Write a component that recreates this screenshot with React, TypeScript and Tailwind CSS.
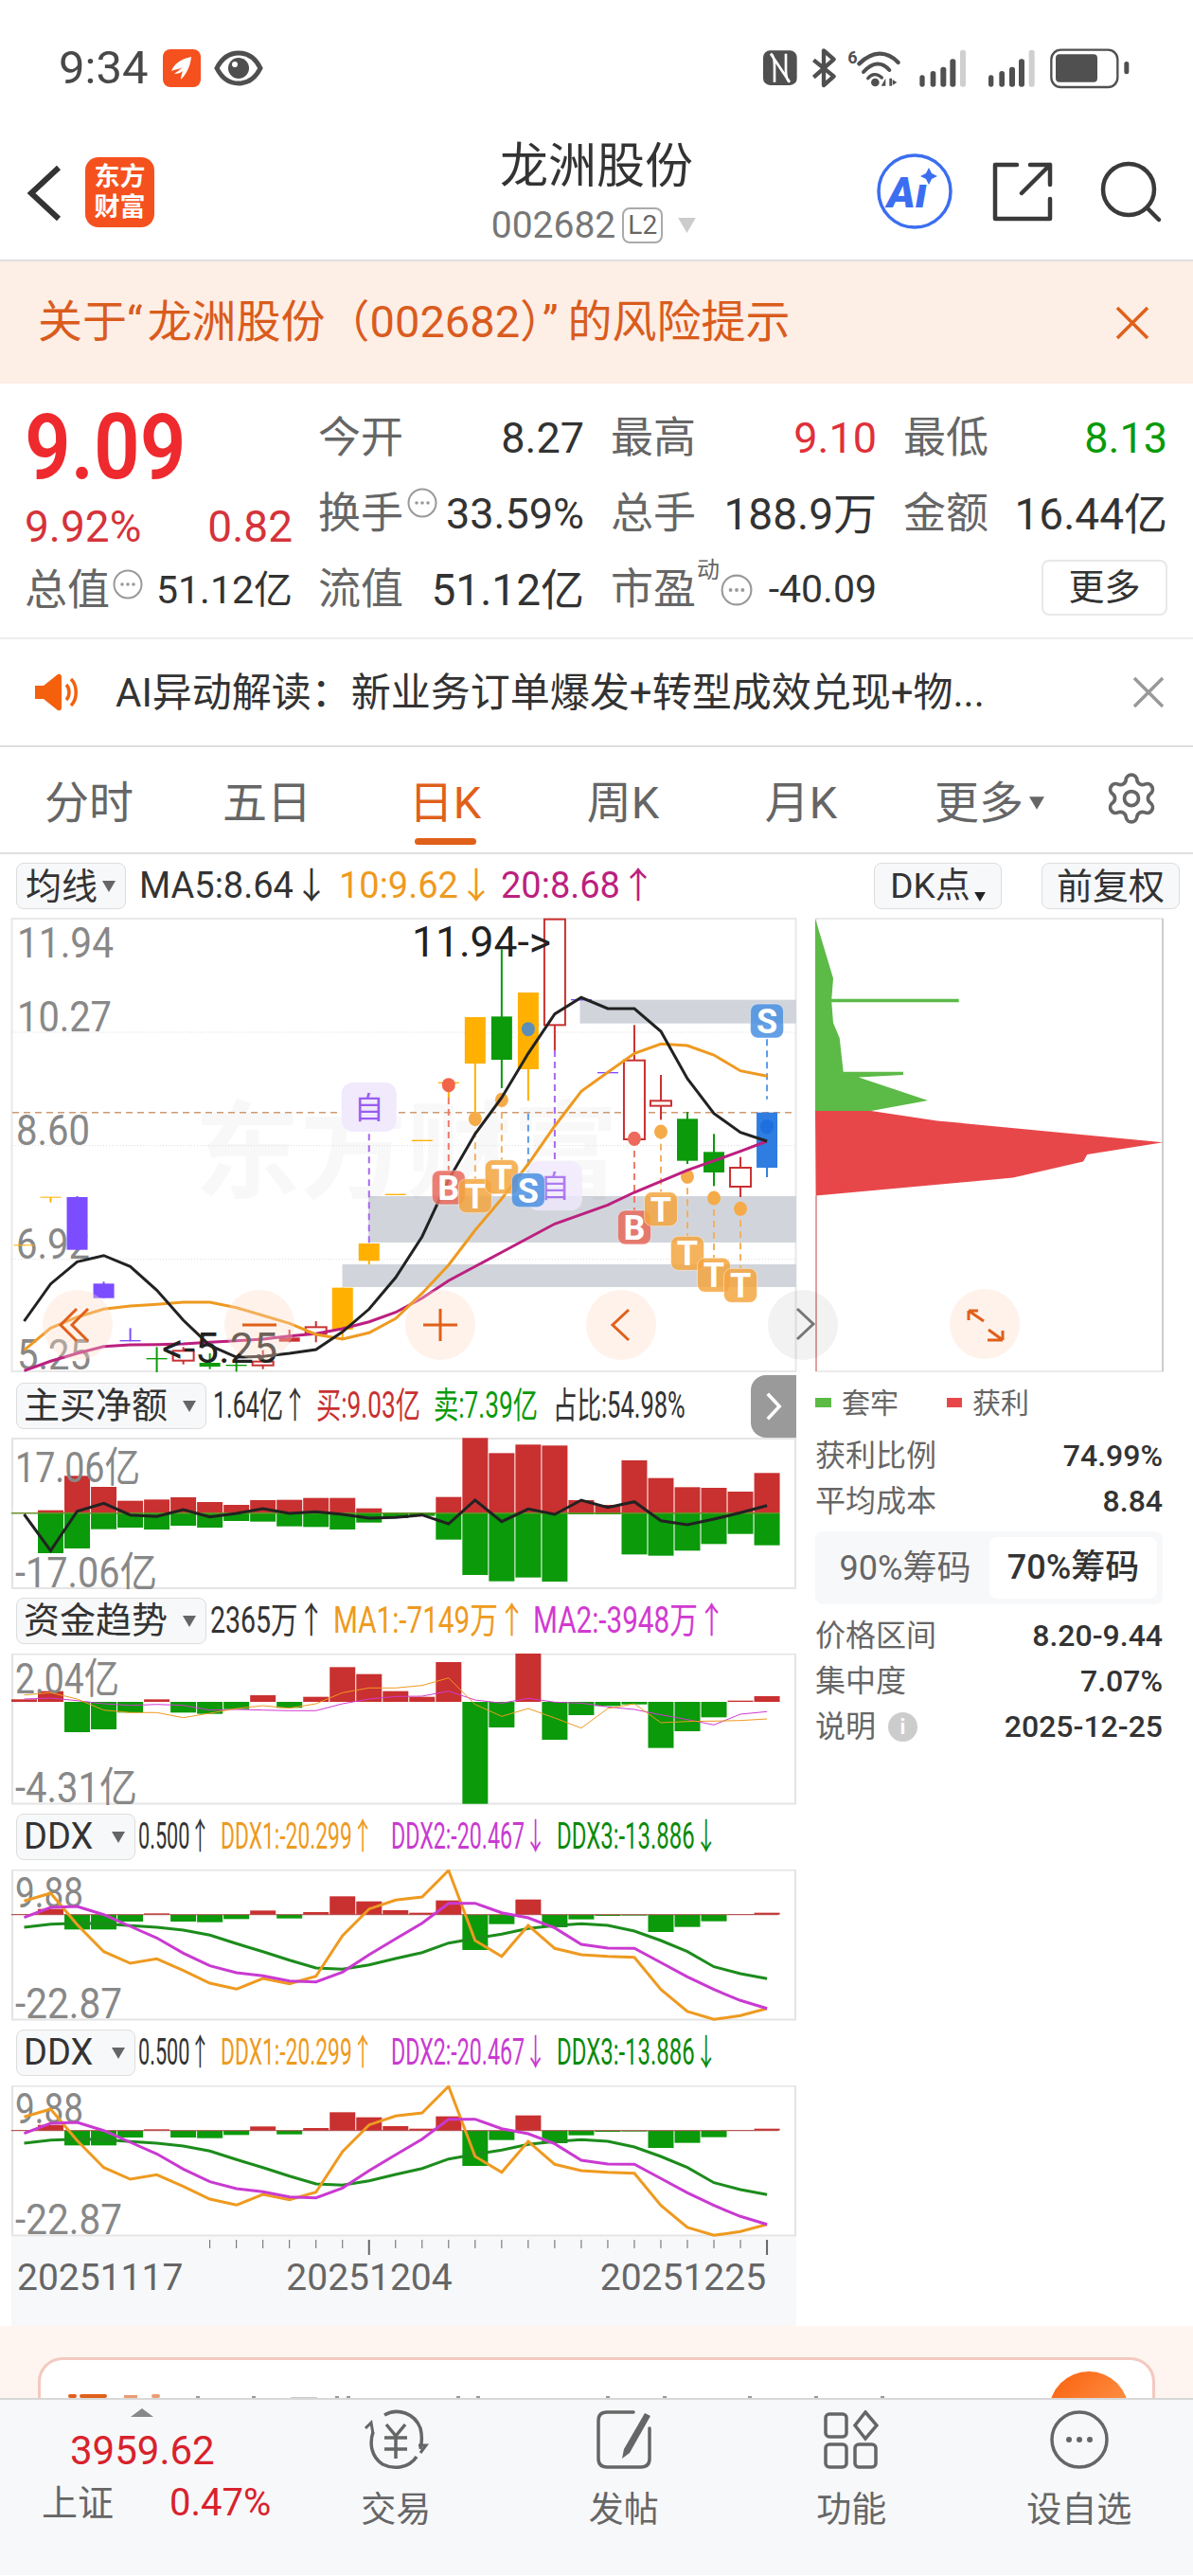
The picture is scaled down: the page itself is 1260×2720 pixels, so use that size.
import React from "react";
import { Settings } from "lucide-react";

const cx = (i: number) => 25.5 + 28.02 * i;
const zx = (v: number) => v / 1.845;
const line = (vals: number[], base: number) =>
  vals.map((v, i) => `${cx(i).toFixed(1)},${(base + v / 3).toFixed(1)}`).join(" ");

const RED = "#c93030";
const GREEN = "#0a9a0a";
const ORANGE = "#ffb000";
const PURPLE = "#7c4dff";
const BLUE = "#2f7de1";

// [index, wickTop, top, bottom, wickBottom, colour, hollow]
const candles: [number, number, number, number, number, string, boolean][] = [
  [0, 1097, 1096, 1099, 1099, ORANGE, false],
  [1, 945, 944, 947, 962, ORANGE, false],
  [2, 942, 945, 1112, 1112, PURPLE, false],
  [3, 1213, 1219, 1265, 1265, PURPLE, false],
  [4, 1360, 1398, 1402, 1402, PURPLE, false],
  [5, 1420, 1455, 1459, 1500, GREEN, false],
  [6, 1420, 1432, 1463, 1475, RED, true],
  [7, 1440, 1470, 1482, 1490, GREEN, false],
  [8, 1465, 1476, 1480, 1498, GREEN, false],
  [9, 1430, 1466, 1478, 1490, RED, true],
  [10, 1365, 1390, 1403, 1405, RED, false],
  [11, 1338, 1357, 1378, 1405, RED, true],
  [12, 1232, 1232, 1365, 1395, ORANGE, false],
  [13, 1092, 1092, 1147, 1158, ORANGE, false],
  [14, 936, 935, 939, 939, ORANGE, false],
  [15, 765, 764, 768, 768, ORANGE, false],
  [16, 581, 581, 585, 630, ORANGE, false],
  [17, 375, 375, 522, 680, ORANGE, false],
  [18, 160, 373, 510, 600, GREEN, false],
  [19, 297, 297, 540, 640, ORANGE, false],
  [20, 65, 65, 400, 480, RED, true],
  [21, 319, 318, 322, 322, PURPLE, false],
  [22, 550, 549, 553, 553, PURPLE, false],
  [23, 400, 512, 762, 762, RED, true],
  [24, 558, 640, 656, 700, RED, true],
  [25, 675, 697, 830, 840, GREEN, false],
  [26, 745, 802, 867, 910, GREEN, false],
  [27, 818, 852, 912, 945, RED, true],
  [28, 677, 677, 852, 882, BLUE, false],
];

const ma5 = [1338, 1220, 1150, 1130, 1165, 1240, 1335, 1415, 1452, 1450, 1440, 1428, 1372, 1300, 1200, 1070, 890, 745, 630, 490, 365, 313, 348, 348, 420, 570, 680, 740, 768];
const ma10 = [1430, 1360, 1325, 1300, 1290, 1285, 1278, 1278, 1295, 1320, 1345, 1380, 1395, 1375, 1330, 1250, 1160, 1050, 950, 840, 720, 610, 550, 490, 460, 465, 495, 545, 562];
const ma20 = [1495, 1465, 1440, 1418, 1413, 1412, 1410, 1405, 1400, 1395, 1385, 1378, 1362, 1340, 1310, 1265, 1210, 1165, 1120, 1075, 1030, 1000, 970, 930, 895, 860, 830, 800, 768];

const netTop = [476, 467, 358, 393, 437, 433, 426, 441, 450, 435, 434, 428, 428, 461, 474, 475, 425, 238, 286, 259, 262, 435, 450, 309, 365, 394, 396, 408, 349];
const netBot = [476, 603, 588, 527, 522, 528, 516, 522, 501, 503, 518, 520, 528, 506, 492, 485, 560, 672, 692, 680, 693, 480, 480, 607, 611, 595, 574, 542, 578];
const netLine = [480, 595, 470, 445, 482, 487, 465, 488, 477, 462, 477, 472, 480, 492, 490, 482, 510, 435, 503, 463, 480, 435, 458, 440, 500, 513, 495, 475, 452];

const flow = [1066, 1040, 1170, 1161, 1108, 1066, 1108, 1112, 1097, 1053, 1093, 1058, 964, 986, 1040, 1058, 948, 1397, 1155, 920, 1194, 1116, 1087, 1082, 1220, 1167, 1123, 1070, 1056];
const flowMa1 = [1052, 1045, 1065, 1100, 1108, 1108, 1124, 1110, 1095, 1086, 1094, 1080, 1045, 1030, 1030, 1022, 998, 1082, 1120, 1095, 1125, 1157, 1095, 1080, 1140, 1136, 1135, 1133, 1128];
const flowMa2 = [1065, 1062, 1070, 1080, 1085, 1082, 1085, 1100, 1098, 1100, 1102, 1102, 1080, 1065, 1057, 1056, 1040, 1068, 1078, 1063, 1075, 1078, 1090, 1098, 1115, 1130, 1147, 1113, 1105];

const ddxBars = [366, 350, 415, 415, 390, 364, 390, 392, 382, 355, 380, 360, 310, 326, 354, 362, 323, 480, 398, 320, 408, 383, 372, 371, 423, 407, 389, 366, 362];
const ddx1 = [325, 300, 400, 485, 522, 508, 545, 585, 604, 570, 587, 563, 435, 350, 322, 312, 228, 450, 500, 402, 475, 495, 500, 503, 605, 675, 700, 688, 665];
const ddx2 = [377, 345, 342, 368, 405, 442, 490, 530, 552, 562, 578, 581, 550, 495, 445, 395, 332, 332, 362, 378, 410, 462, 474, 475, 520, 565, 605, 640, 665];
const ddx3 = [408, 398, 395, 397, 403, 408, 417, 433, 460, 485, 512, 537, 541, 527, 507, 488, 458, 443, 430, 412, 403, 397, 402, 420, 450, 485, 533, 555, 571];

const Tri = ({ className = "", color = "#666" }: { className?: string; color?: string }) => (
  <svg viewBox="0 0 14 12" className={className}>
    <path d="M0 0H14L7 12Z" fill={color} />
  </svg>
);

const Dots = ({ className = "" }: { className?: string }) => (
  <svg viewBox="0 0 32 32" className={className}>
    <circle cx="16" cy="16" r="14.5" fill="none" stroke="#999" strokeWidth="2" />
    <circle cx="10" cy="16" r="1.8" fill="#999" />
    <circle cx="16" cy="16" r="1.8" fill="#999" />
    <circle cx="22" cy="16" r="1.8" fill="#999" />
  </svg>
);

const StatusBar = () => (
  <div className="h-[100px] flex items-start pt-[52px] pl-[62px]">
    <span className="text-[49px] leading-[40px] text-[#484848] w-[110px]">9:34</span>
    <div className="w-[40px] h-[40px] rounded-lg bg-[#f4511e] flex items-center justify-center">
      <svg viewBox="0 0 40 40" className="w-[40px] h-[40px]">
        <path d="M30 8C20 10 12 15 9 23c5-2 9-2 12-4-3 3-7 5-9 7 4 0 7-1 9-3-1 3-2 6-2 9 6-6 10-14 11-24Z" fill="#fff" />
      </svg>
    </div>
    <svg viewBox="0 0 52 40" className="w-[52px] h-[40px] ml-[14px]">
      <path d="M3 20C9 8 17 4 26 4s17 4 23 16c-6 12-14 16-23 16S9 32 3 20Z" fill="none" stroke="#4f4f4f" strokeWidth="5" />
      <circle cx="26" cy="20" r="11" fill="#4f4f4f" />
      <circle cx="22" cy="16" r="3" fill="#fff" />
    </svg>
    <svg viewBox="0 0 1260 210" className="w-[420px] h-[70px] ml-[512px] -mt-[12px]">
      <rect x="48" y="40" width="107" height="110" rx="22" fill="#505050" />
      <path d="M72 50C82 56 84 70 84 88V140M72 50L132 140M120 50V102C120 120 122 134 132 140" fill="none" stroke="#fff" strokeWidth="8" />
      <path d="M208 70L272 122L240 150V40L272 68L208 125" fill="none" stroke="#505050" strokeWidth="13" strokeLinejoin="round" />
      <text x="316" y="82" fontSize="54" fontWeight="700" fill="#505050">6</text>
      <path d="M352 82C395 40 440 40 476 78" fill="none" stroke="#505050" strokeWidth="13" strokeLinecap="round" />
      <path d="M366 108C395 75 425 75 448 102" fill="none" stroke="#505050" strokeWidth="12" strokeLinecap="round" />
      <path d="M380 128C392 112 410 112 424 126" fill="none" stroke="#505050" strokeWidth="10" strokeLinecap="round" />
      <circle cx="403" cy="141" r="13" fill="#505050" />
      <path d="M422 152L436 128V152ZM448 128V152H456V128ZM458 132L472 141L458 150Z" fill="#505050" />
      {[0, 218].map((off) => (
        <g key={off}>
          <rect x={544 + off} y="118" width="16" height="37" rx="8" fill="#505050" />
          <rect x={578 + off} y="105" width="17" height="50" rx="8" fill="#505050" />
          <rect x={610 + off} y="92" width="18" height="63" rx="8" fill="#505050" />
          <rect x={640 + off} y="67" width="18" height="88" rx="8" fill="#505050" />
          <rect x={672 + off} y="38" width="18" height="117" rx="8" fill="#cfcfcf" />
        </g>
      ))}
      <rect x="961" y="38" width="210" height="118" rx="30" fill="none" stroke="#505050" strokeWidth="7" />
      <rect x="975" y="52" width="132" height="88" rx="12" fill="#505050" />
      <rect x="1192" y="75" width="15" height="40" rx="7" fill="#505050" />
    </svg>
  </div>
);

const Header = () => (
  <div className="h-[176px] border-b-2 border-[#e0e0e0] flex">
    <div className="w-[400px] flex items-start pt-[66px] pl-[28px]">
      <svg viewBox="0 0 38 60" className="w-[38px] h-[60px] mt-[8px]">
        <path d="M34 3L5 30L34 57" fill="none" stroke="#333" strokeWidth="6" />
      </svg>
      <div className="ml-[24px] w-[73px] h-[74px] rounded-[14px] bg-[#f4511e] text-white text-[27px] leading-[32px] font-bold text-center pt-[5px]">
        东方
        <br />
        财富
      </div>
    </div>
    <div className="w-[460px] flex flex-col items-center pt-[46px]">
      <span className="text-[51px] leading-[60px] text-[#333]">龙洲股份</span>
      <div className="flex items-center mt-[12px] h-[40px] -ml-[3px]">
        <span className="text-[39px] leading-[40px] text-[#777]">002682</span>
        <span className="ml-[7px] w-[43px] h-[38px] border-2 border-[#aaa] rounded-lg text-[28px] leading-[34px] text-center text-[#666]">L2</span>
        <Tri className="ml-[13px] w-[25px] h-[16px]" color="#ccc" />
      </div>
    </div>
    <div className="flex-1 flex items-start pt-[60px] pl-[64px]">
      <svg viewBox="0 0 84 84" className="w-[84px] h-[84px]">
        <circle cx="42" cy="42" r="38" fill="none" stroke="#3b6ef0" strokeWidth="3.5" />
        <text x="13" y="59" fontSize="45" fontWeight="900" fontStyle="italic" fill="#3b6ef0">Aı</text>
        <path d="M57 17L60 23L66 26L60 29L57 35L54 29L48 26L54 23Z" fill="#3b6ef0" />
      </svg>
      <svg viewBox="0 0 64 64" className="w-[64px] h-[64px] ml-[40px] mt-[10px]">
        <path d="M26 4H3V61H61V40M40 4H61V25M61 4L31 34" fill="none" stroke="#3a3a3a" strokeWidth="4.5" strokeLinecap="round" strokeLinejoin="round" />
      </svg>
      <svg viewBox="0 0 66 66" className="w-[66px] h-[66px] ml-[50px] mt-[10px]">
        <circle cx="30" cy="30" r="27" fill="none" stroke="#3a3a3a" strokeWidth="4.5" />
        <path d="M50 50L62 62" stroke="#3a3a3a" strokeWidth="4.5" strokeLinecap="round" />
      </svg>
    </div>
  </div>
);

const Banner = () => (
  <div className="h-[129px] bg-[#fdeee6] flex items-center justify-between pl-[40px] pr-[46px]">
    <span className="text-[47px] text-[#d95c1d] whitespace-nowrap">
      关于<span className="mr-[5px]">“</span>龙洲股份（002682）<span className="mr-[10px]">”</span>的风险提示
    </span>
    <svg viewBox="0 0 36 36" className="w-[36px] h-[36px]">
      <path d="M2 2L34 34M34 2L2 34" stroke="#e0601a" strokeWidth="3.5" />
    </svg>
  </div>
);

const Cell = ({ label, value, color = "#333", big, extra }: { label: string; value: string; color?: string; big?: boolean; extra?: React.ReactNode }) => (
  <div className="flex items-center justify-between h-[80px] whitespace-nowrap">
    <span className="text-[45px] text-[#666] flex items-center">
      {label}
      {extra}
    </span>
    <span className={big ? "text-[46px]" : "text-[45px]"} style={{ color }}>{value}</span>
  </div>
);

const Quote = () => (
  <div className="h-[270px] border-b-2 border-[#eee] flex">
    <div className="w-[336px] pl-[26px] pr-[27px] pt-[21px]">
      <div className="h-[92px] flex items-center">
        <span className="text-[97px] leading-[92px] font-semibold text-[#ee2a2e] origin-left scale-x-[0.88] inline-block">9.09</span>
      </div>
      <div className="h-[76px] flex items-center justify-between text-[46px] text-[#d5333b]">
        <span>9.92%</span>
        <span>0.82</span>
      </div>
      <div className="h-[60px] flex items-center justify-between whitespace-nowrap">
        <span className="text-[45px] text-[#666] flex items-center">
          总值
          <Dots className="w-[32px] h-[32px] -mt-[14px] ml-[3px]" />
        </span>
        <span className="text-[41px] text-[#333]">51.12亿</span>
      </div>
    </div>
    <div className="flex-1 pt-[18px] pr-[27px] grid grid-cols-[281px_281px_279px] gap-x-[28px] content-start">
      <Cell label="今开" value="8.27" />
      <Cell label="最高" value="9.10" color="#e0303a" />
      <Cell label="最低" value="8.13" color="#0a9a0a" />
      <Cell label="换手" value="33.59%" extra={<Dots className="w-[32px] h-[32px] -mt-[24px] ml-[4px]" />} />
      <Cell label="总手" value="188.9万" big />
      <Cell label="金额" value="16.44亿" big />
      <Cell label="流值" value="51.12亿" big />
      <div className="flex items-center justify-between h-[80px] whitespace-nowrap">
        <span className="text-[45px] text-[#666] flex items-center">
          市盈
          <span className="text-[24px] leading-[24px] -mt-[42px] ml-[1px]">动</span>
          <Dots className="w-[34px] h-[34px] ml-[1px]" />
        </span>
        <span className="text-[41px] text-[#333]">-40.09</span>
      </div>
      <div className="flex items-center justify-end h-[80px] -mt-[3px]">
        <div className="w-[133px] h-[59px] border-2 border-[#e8e8e8] rounded-lg text-[38px] leading-[54px] text-center text-[#333]">更多</div>
      </div>
    </div>
  </div>
);

const AiRow = () => (
  <div className="h-[114px] border-b-2 border-[#ddd] flex items-center pl-[37px] pr-[30px]">
    <svg viewBox="0 0 48 40" className="w-[48px] h-[40px]">
      <path d="M0 13H9L24 1C27 0 28 2 28 4V36C28 38 27 40 24 39L9 27H0Z" fill="#f4600c" />
      <path d="M33 12C37 16 37 24 33 28M38 6C45 13 45 27 38 34" fill="none" stroke="#f4600c" strokeWidth="3.5" />
    </svg>
    <span className="ml-[37px] text-[42px] text-[#333] whitespace-nowrap">AI异动解读：新业务订单爆发+转型成效兑现+物...</span>
    <svg viewBox="0 0 34 34" className="w-[34px] h-[34px] ml-auto">
      <path d="M2 2L32 32M32 2L2 32" stroke="#999" strokeWidth="3.5" />
    </svg>
  </div>
);

const tabs = ["分时", "五日", "日K", "周K", "月K", "更多"];

const Tabs = () => (
  <div className="h-[113px] border-b-2 border-[#e0e0e0] flex">
    {tabs.map((t) => (
      <div key={t} className="w-[188px] flex flex-col items-center pt-[29px]">
        <div className={t === "日K" ? "text-[47px] leading-[60px] text-[#e0601a] flex items-center" : "text-[47px] leading-[60px] text-[#666] flex items-center"}>
          {t}
          {t === "更多" && <Tri className="w-[16px] h-[14px] ml-[6px] -mr-[22px]" />}
        </div>
        {t === "日K" && <div className="w-[65px] h-[7px] mt-[7px] rounded-full bg-[#e0601a]" />}
      </div>
    ))}
    <Settings size={60} strokeWidth={1.5} className="text-[#666] ml-[37px] mt-[24px]" />
  </div>
);

const Toolbar = () => (
  <div className="h-[67px] flex items-start pt-[9px] pl-[17px] text-[38px] leading-[48px] whitespace-nowrap">
    <div className="w-[116px] h-[49px] border border-[#ddd] rounded-lg bg-[#f7f8fa] flex items-center pl-[9px] text-[38px] text-[#333]">
      均线
      <Tri className="w-[14px] h-[12px] ml-[5px]" />
    </div>
    <span className="ml-[14px] text-[#333]">MA5:8.64↓</span>
    <span className="ml-[10px] text-[#ee9a20]">10:9.62↓</span>
    <span className="ml-[7px] text-[#bc1f7f]">20:8.68↑</span>
    <div className="ml-auto w-[135px] h-[49px] border border-[#ddd] rounded-lg bg-[#f7f8fa] flex items-center justify-center text-[37px] text-[#333]">
      DK点
      <Tri className="w-[12px] h-[10px] ml-[4px] mt-[22px]" color="#222" />
    </div>
    <div className="ml-[42px] mr-[14px] w-[146px] h-[49px] border border-[#ddd] rounded-lg bg-[#f7f8fa] flex items-center justify-center text-[38px] text-[#333]">
      前复权
    </div>
  </div>
);

const Badge = ({ i, y, t, c }: { i: number; y: number; t: string; c: string }) => (
  <g>
    <rect x={cx(i) - 17.5} y={950 + y / 3 - 18} width="35" height="36" rx="8" fill={c} opacity="0.85" stroke="#fff" strokeOpacity="0.5" />
    <text x={cx(i)} y={950 + y / 3 + 13} textAnchor="middle" fontSize="36" fontWeight="700" fill="#fff">{t}</text>
  </g>
);

const Self = ({ i, y, o = 1 }: { i: number; y: number; o?: number }) => (
  <g opacity={o}>
    <rect x={cx(i) - 29} y={950 + y / 3 - 26} width="58" height="52" rx="12" fill="#f1eafd" />
    <text x={cx(i)} y={950 + y / 3 + 12} textAnchor="middle" fontSize="32" fill="#9a5cf0">自</text>
  </g>
);

const Dash = ({ i, a, b, c }: { i: number; a: number; b: number; c: string }) => (
  <line x1={cx(i)} x2={cx(i)} y1={950 + a / 3} y2={950 + b / 3} stroke={c} strokeWidth="2" strokeDasharray="7 5" />
);

const Dot = ({ i, y, c }: { i: number; y: number; c: string }) => (
  <ellipse cx={cx(i)} cy={950 + y / 3} rx="7" ry="7.5" fill={c} />
);

const Label = ({ x, y, w, t, c = "#888" }: { x: number; y: number; w: number; t: string; c?: string }) => (
  <text x={x} y={y} fontSize="44" fill={c} textLength={w} lengthAdjust="spacingAndGlyphs">{t}</text>
);

const MainChart = () => (
  <svg viewBox="12 970 829 480" className="w-[829px] h-[480px] ml-[12px] block overflow-visible relative z-10">
    <rect x="12.5" y="971" width="828" height="478" fill="#fff" stroke="#e8e8e8" strokeWidth="2" />
    <rect x={zx(1130)} y={950 + 320 / 3} width={841 - zx(1130)} height="25" fill="#d1d5db" />
    <rect x={zx(718)} y={950 + 942 / 3} width={841 - zx(718)} height="49" fill="#d1d5db" />
    <rect x={zx(667)} y={950 + 1158 / 3} width={841 - zx(667)} height="24" fill="#d1d5db" />
    <text x="205" y="1258" fontSize="112" fontWeight="700" fill="#000" opacity="0.025" textLength="448" lengthAdjust="spacingAndGlyphs">东方财富</text>
    {[423, 782, 1142].map((y) => (
      <line key={y} x1="13" x2="840" y1={950 + y / 3} y2={950 + y / 3} stroke="#ddd" strokeWidth="1" strokeDasharray="1 2" />
    ))}
    <line x1="13" x2="840" y1={950 + 677 / 3} y2={950 + 677 / 3} stroke="#cf9a70" strokeWidth="1.5" strokeDasharray="7 5" />
    <Label x={18} y={1012} w={102} t="11.94" />
    <Label x={18} y={1090} w={100} t="10.27" />
    <Label x={17} y={1210} w={78} t="8.60" />
    <Label x={17} y={1330} w={78} t="6.92" />
    <Label x={18} y={1447} w={78} t="5.25" />
    <Dash i={13} a={745} b={1090} c="#a868f0" />
    <Dash i={16} a={630} b={860} c="#ee7a6a" />
    <Dash i={17} a={700} b={887} c="#f2b060" />
    <Dash i={18} a={640} b={828} c="#f2b060" />
    <Dash i={19} a={680} b={868} c="#5a9ae8" />
    <Dash i={20} a={480} b={832} c="#a868f0" />
    <Dash i={23} a={762} b={988} c="#ee7a6a" />
    <Dash i={24} a={740} b={928} c="#f2b060" />
    <Dash i={25} a={880} b={1068} c="#f2b060" />
    <Dash i={26} a={948} b={1138} c="#f2b060" />
    <Dash i={27} a={982} b={1170} c="#f2b060" />
    <Dash i={28} a={445} b={635} c="#5a9ae8" />
    {candles.map(([i, wt, t, b, wb, c, hollow]) => (
      <g key={i}>
        <line x1={cx(i)} x2={cx(i)} y1={950 + wt / 3} y2={950 + wb / 3} stroke={c} strokeWidth="2" />
        <rect x={cx(i) - 11} y={950 + t / 3} width="22" height={(b - t) / 3} fill={hollow ? "#fff" : c} stroke={c} strokeWidth={hollow ? 2 : 0} />
      </g>
    ))}
    <Dot i={16} y={590} c="#f2654a" />
    <Dot i={17} y={697} c="#f5ab4a" />
    <Dot i={18} y={637} c="#f5ab4a" />
    <Dot i={19} y={413} c="#5b8fb9" />
    <Dot i={23} y={760} c="#ee6a5c" />
    <Dot i={24} y={738} c="#f5ab4a" />
    <Dot i={25} y={880} c="#f5ab4a" />
    <Dot i={26} y={948} c="#f5ab4a" />
    <Dot i={27} y={982} c="#f5ab4a" />
    <Dot i={28} y={722} c="#1e6fe0" />
    <polyline points={line(ma20, 950)} fill="none" stroke="#bc1f7f" strokeWidth="3" />
    <polyline points={line(ma10, 950)} fill="none" stroke="#ee9a20" strokeWidth="3" />
    <polyline points={line(ma5, 950)} fill="none" stroke="#222" strokeWidth="3" />
    <Self i={13} y={660} />
    <Self i={20} y={910} o={0.8} />
    <Badge i={16} y={915} t="B" c="#e8695c" />
    <Badge i={17} y={941} t="T" c="#f4a640" />
    <Badge i={18} y={881} t="T" c="#f4a640" />
    <Badge i={19} y={923} t="S" c="#4a90e2" />
    <Badge i={23} y={1041} t="B" c="#e8695c" />
    <Badge i={24} y={983} t="T" c="#f4a640" />
    <Badge i={25} y={1123} t="T" c="#f4a640" />
    <Badge i={26} y={1192} t="T" c="#f4a640" />
    <Badge i={27} y={1225} t="T" c="#f4a640" />
    <Badge i={28} y={387} t="S" c="#4a90e2" />
    <Label x={435} y={1011} w={147} t="11.94->" c="#222" />
    <Label x={171} y={1440} w={122} t="<-5.25" c="#222" />
    {[82, 274, 465, 656].map((x) => (
      <circle key={x} cx={x} cy="1400" r="37" fill="#fbd9c6" opacity="0.35" />
    ))}
    <circle cx="848" cy="1400" r="37" fill="#000" opacity="0.05" />
    <path d="M93 1383L76 1400L93 1417M81 1383L64 1400L81 1417" fill="none" stroke="#e0601a" strokeWidth="3" />
    <path d="M256 1400H292" stroke="#e0601a" strokeWidth="3" />
    <path d="M447 1400H483M465 1383V1417" stroke="#e0601a" strokeWidth="3" />
    <path d="M664 1384L647 1400L664 1416" fill="none" stroke="#e0601a" strokeWidth="3" />
    <path d="M842 1383L859 1399L842 1415" fill="none" stroke="#777" strokeWidth="3" />
  </svg>
);

const Bars = ({ tops, bots, base, zero }: { tops: number[]; bots: number[]; base: number; zero: number }) => (
  <>
    {tops.map((t, i) => (
      <g key={i}>
        <rect x={cx(i) - 13.5} y={base + t / 3} width="27" height={(zero - t) / 3} fill={RED} />
        <rect x={cx(i) - 13.5} y={base + zero / 3} width="27" height={(bots[i] - zero) / 3} fill={GREEN} />
      </g>
    ))}
  </>
);

const Signed = ({ vals, base, zero }: { vals: number[]; base: number; zero: number }) => (
  <>
    {vals.map((v, i) => (
      <rect
        key={i}
        x={cx(i) - 13.5}
        y={base + Math.min(v, zero) / 3}
        width="27"
        height={Math.abs(v - zero) / 3}
        fill={v < zero ? RED : GREEN}
      />
    ))}
  </>
);

const NetChart = () => (
  <svg viewBox="12 1519 829 160" className="w-[829px] h-[160px] ml-[12px] block">
    <rect x="13" y="1520" width="827" height="158" fill="#fff" stroke="#e4e4e4" strokeWidth="2" />
    <Bars tops={netTop} bots={netBot} base={1440} zero={476} />
    <line x1="12" x2="822" y1="1598.7" y2="1598.7" stroke="#6b8f2a" strokeWidth="1.5" />
    <Label x={16} y={1566} w={132} t="17.06亿" />
    <Label x={16} y={1677} w={150} t="-17.06亿" />
    <polyline points={line(netLine, 1440)} fill="none" stroke="#222" strokeWidth="3" />
  </svg>
);

const FlowChart = () => (
  <svg viewBox="12 1747 829 160" className="w-[829px] h-[160px] ml-[12px] block">
    <rect x="13" y="1747.5" width="827" height="158" fill="#fff" stroke="#e4e4e4" strokeWidth="2" />
    <Signed vals={flow} base={1440} zero={1074} />
    <Label x={16} y={1789} w={110} t="2.04亿" />
    <Label x={16} y={1904} w={129} t="-4.31亿" />
    <polyline points={line(flowMa2, 1440)} fill="none" stroke="#d13ad1" strokeWidth="1" />
    <polyline points={line(flowMa1, 1440)} fill="none" stroke="#ee9a20" strokeWidth="1" />
  </svg>
);

const DdxChart = ({ off }: { off: number }) => (
  <svg viewBox={`12 ${1975 + off} 829 160`} className="w-[829px] h-[160px] ml-[12px] block">
    <rect x="13" y={1975.5 + off} width="827" height="158" fill="#fff" stroke="#e4e4e4" strokeWidth="2" />
    <Signed vals={ddxBars} base={1900 + off} zero={368} />
    <line x1="12" x2="822" y1={2022.7 + off} y2={2022.7 + off} stroke="#b04a4a" strokeWidth="1" />
    <Label x={16} y={2015 + off} w={72} t="9.88" />
    <Label x={16} y={2132 + off} w={113} t="-22.87" />
    <polyline points={line(ddx3, 1900 + off)} fill="none" stroke="#1c8c1c" strokeWidth="3" />
    <polyline points={line(ddx1, 1900 + off)} fill="none" stroke="#ee9a20" strokeWidth="3" />
    <polyline points={line(ddx2, 1900 + off)} fill="none" stroke="#c93ad1" strokeWidth="3" />
  </svg>
);

const SelectBtn = ({ label, w }: { label: string; w: string }) => (
  <div className={`${w} h-[49px] shrink-0 border border-[#ddd] rounded-lg bg-[#f7f8fa] flex items-center justify-between pl-[7px] pr-[10px] text-[38px] text-[#333]`}>
    {label}
    <Tri className="w-[14px] h-[12px]" />
  </div>
);

const NetHeader = () => (
  <div className="h-[69px] flex items-start pl-[17px] text-[38px] leading-[49px] whitespace-nowrap">
    <div className="mt-[11px] flex items-center">
      <SelectBtn label="主买净额" w="w-[201px]" />
      <div className="w-[95px] ml-[7px]"><span className="inline-block origin-left scale-x-[0.66] text-[#333]">1.64亿↑</span></div>
      <div className="w-[108px] ml-[14px]"><span className="inline-block origin-left scale-x-[0.69] text-[#c93030]">买:9.03亿</span></div>
      <div className="w-[108px] ml-[16px]"><span className="inline-block origin-left scale-x-[0.69] text-[#0a9a0a]">卖:7.39亿</span></div>
      <div className="w-[142px] ml-[18px]"><span className="inline-block origin-left scale-x-[0.67] text-[#333]">占比:54.98%</span></div>
    </div>
    <div className="ml-auto mt-[3px] w-[48px] h-[66px] rounded-l-2xl bg-[#9a9a9a] flex items-center justify-center">
      <svg viewBox="0 0 20 36" className="w-[18px] h-[32px]">
        <path d="M3 3L17 18L3 33" fill="none" stroke="#fff" strokeWidth="4" />
      </svg>
    </div>
  </div>
);

const FlowHeader = () => (
  <div className="h-[68px] flex items-center pl-[17px] text-[38px] leading-[49px] whitespace-nowrap pt-[9px] pb-[10px]">
    <SelectBtn label="资金趋势" w="w-[201px]" />
    <div className="w-[114px] ml-[4px]"><span className="inline-block origin-left scale-x-[0.75] text-[#333]">2365万↑</span></div>
    <div className="w-[196px] ml-[16px]"><span className="inline-block origin-left scale-x-[0.78] text-[#ee9a20]">MA1:-7149万↑</span></div>
    <div className="w-[195px] ml-[15px]"><span className="inline-block origin-left scale-x-[0.78] text-[#d13ad1]">MA2:-3948万↑</span></div>
  </div>
);

const DdxHeader = () => (
  <div className="h-[68px] flex items-center pl-[17px] text-[38px] leading-[49px] whitespace-nowrap pt-[9px] pb-[10px]">
    <SelectBtn label="DDX" w="w-[126px]" />
    <div className="w-[76px] ml-[3px]"><span className="inline-block origin-left scale-x-[0.57] text-[#333]">0.500↑</span></div>
    <div className="w-[162px] ml-[11px]"><span className="inline-block origin-left scale-x-[0.6] text-[#ee9a20]">DDX1:-20.299↑</span></div>
    <div className="w-[167px] ml-[18px]"><span className="inline-block origin-left scale-x-[0.61] text-[#c93ad1]">DDX2:-20.467↓</span></div>
    <div className="w-[168px] ml-[8px]"><span className="inline-block origin-left scale-x-[0.63] text-[#0a8a0a]">DDX3:-13.886↓</span></div>
  </div>
);

const DateAxis = () => (
  <div className="h-[94px] ml-[12px] w-[829px] bg-[#f7f8fa]">
    <svg viewBox="12 2363 829 22" className="w-[829px] h-[22px] block">
      {Array.from({ length: 22 }).map((_, i) => {
        const k = i + 7;
        const major = k === 13 || k === 28;
        return <line key={k} x1={cx(k)} x2={cx(k)} y1="2366" y2={major ? 2382 : 2375} stroke="#666" strokeWidth={major ? 2 : 1} />;
      })}
    </svg>
    <div className="flex text-[39px] leading-[40px] text-[#666] pl-[6px] pt-[1px]">
      <span>20251117</span>
      <span className="ml-[109px]">20251204</span>
      <span className="ml-[156px]">20251225</span>
    </div>
  </div>
);

const px = (v: number) => 840 + v / 3;
const py = (v: number) => 950 + v / 1.742;
const poly = (p: number[][]) => p.map(([x, y]) => `${px(x).toFixed(1)},${py(y).toFixed(1)}`).join(" ");

const StatRow = ({ label, value, extra }: { label: string; value: string; extra?: React.ReactNode }) => (
  <div className="h-[48px] flex items-center justify-between text-[32px]">
    <span className="text-[#666] flex items-center">
      {label}
      {extra}
    </span>
    <span className="text-[#333] font-medium">{value}</span>
  </div>
);

const ChipPanel = () => (
  <div className="w-[367px] ml-[20px]">
    <svg viewBox="861 971 368 480" className="w-[368px] h-[480px] block">
      <rect x="862" y="972" width="366" height="478" fill="#fff" stroke="#e4e4e4" strokeWidth="1.5" />
      <line x1="1228" x2="1228" y1="972" y2="1450" stroke="#ccc" strokeWidth="2" />
      <polygon
        fill="#5cba47"
        points={poly([[63, 38], [120, 148], [115, 186], [518, 186], [518, 192], [115, 192], [120, 230], [140, 258], [152, 320], [342, 320], [342, 326], [200, 330], [420, 373], [240, 392], [63, 392]])}
      />
      <polygon fill="#e8474a" points={poly([[63, 392], [240, 392], [450, 410], [1165, 450], [925, 472], [912, 485], [690, 515], [65, 548]])} />
      <line x1="862" x2="862" y1={py(548)} y2="1450" stroke="#e0a0a0" strokeWidth="2" />
      <circle cx="1040" cy="1400" r="37" fill="#fbd9c6" opacity="0.35" />
      <path d="M1023 1386V1396M1023 1386H1033M1023 1386L1039 1397M1059 1417V1407M1059 1417H1043M1059 1417L1044 1406" fill="none" stroke="#e0601a" strokeWidth="3" />
    </svg>
    <div className="h-[64px] flex items-center text-[30px] text-[#666]">
      <div className="w-[17px] h-[10px] bg-[#5cba47]" />
      <span className="ml-[11px] w-[111px]">套牢</span>
      <div className="w-[16px] h-[10px] bg-[#e8474a]" />
      <span className="ml-[11px]">获利</span>
    </div>
    <StatRow label="获利比例" value="74.99%" />
    <StatRow label="平均成本" value="8.84" />
    <div className="mt-[8px] h-[77px] rounded-lg bg-[#f7f8fa] flex items-center pl-[6px] text-[36px] whitespace-nowrap">
      <div className="w-[178px] text-center text-[#666]">90%筹码</div>
      <div className="w-[177px] h-[65px] rounded-lg bg-white text-center leading-[65px] font-medium text-[#333]">70%筹码</div>
    </div>
    <div className="h-[9px]" />
    <StatRow label="价格区间" value="8.20-9.44" />
    <StatRow label="集中度" value="7.07%" />
    <StatRow
      label="说明"
      value="2025-12-25"
      extra={
        <span className="ml-[13px] w-[31px] h-[31px] rounded-full bg-[#ccc] text-white text-[22px] leading-[31px] text-center font-bold">i</span>
      }
    />
  </div>
);

const Promo = () => (
  <div className="h-[76px] bg-[#fef4f0] pt-[33px] px-[40px] overflow-hidden">
    <div className="h-[60px] rounded-t-[26px] border-[3px] border-[#f3c9bf] bg-white overflow-hidden">
      <svg viewBox="43 2493 1174 40" className="w-[1174px] h-[40px] block">
        <defs>
          <linearGradient id="promoDot" x1="0" x2="1" y1="0" y2="1">
            <stop offset="0" stopColor="#f9600c" />
            <stop offset="1" stopColor="#ffa45c" />
          </linearGradient>
        </defs>
        <circle cx="1150" cy="2547" r="42" fill="url(#promoDot)" />
        <rect x="72" y="2529" width="9" height="4" rx="2" fill="#e0601a" />
        <rect x="84" y="2529" width="29" height="4" rx="2" fill="#e0601a" />
        <rect x="131" y="2530" width="14" height="3" fill="#eb9c74" />
        <rect x="160" y="2529" width="9" height="4" rx="2" fill="#eb9c74" />
        {[207, 266, 354, 366, 482, 503, 640, 700, 790, 860, 930].map((x) => (
          <rect key={x} x={x} y="2531" width="4" height="2" fill="#999" />
        ))}
        <rect x="307" y="2532" width="28" height="1" fill="#ccc" />
      </svg>
    </div>
  </div>
);

const NavItem = ({ label, children }: { label: string; children: React.ReactNode }) => (
  <div className="w-[240.5px] flex flex-col items-center pt-[10px]">
    <div className="h-[64px] flex items-center justify-center">{children}</div>
    <span className="mt-[23px] text-[37px] leading-[40px] text-[#666]">{label}</span>
  </div>
);

const BottomNav = () => (
  <div className="h-[187px] bg-[#f7f8fa] border-t-2 border-[#d8d8d8] flex">
    <div className="w-[298px] pl-[44px] pt-[9px]">
      <svg viewBox="0 0 24 9" className="w-[24px] h-[9px] ml-[94px]">
        <path d="M12 0L24 9H0Z" fill="#888" />
      </svg>
      <div className="ml-[30px] mt-[16px] text-[42px] leading-[40px] text-[#d8222c]">3959.62</div>
      <div className="mt-[15px] flex items-center h-[40px] whitespace-nowrap">
        <span className="text-[38px] text-[#666]">上证</span>
        <span className="ml-[59px] text-[40px] text-[#d8222c]">0.47%</span>
      </div>
    </div>
    <NavItem label="交易">
      <svg viewBox="0 0 72 64" className="w-[72px] h-[64px]" fill="none" stroke="#666" strokeWidth="3.5">
        <path d="M12 24C8 36 10 50 22 58C34 64 50 62 58 50" />
        <path d="M4 20L10 14L12 26M62 46L68 38L60 38" strokeWidth="3" />
        <path d="M24 6C38 -2 56 4 62 20C64 28 64 34 62 42" />
        <path d="M26 16L36 28L46 16M24 30H48M24 42H48M36 28V52" />
      </svg>
    </NavItem>
    <NavItem label="发帖">
      <svg viewBox="0 0 60 64" className="w-[60px] h-[64px]" fill="none" stroke="#666" strokeWidth="3.5">
        <path d="M40 3H12C6 3 3 6 3 12V52C3 58 6 61 12 61H48C54 61 57 58 57 52V20" strokeLinecap="round" />
        <path d="M52 4L58 7L36 46L28 52L30 42Z" fill="#666" stroke="none" />
      </svg>
    </NavItem>
    <NavItem label="功能">
      <svg viewBox="0 0 58 62" className="w-[58px] h-[62px]" fill="none" stroke="#666" strokeWidth="3.5">
        <rect x="2" y="4" width="22" height="24" rx="4" />
        <rect x="2" y="36" width="22" height="24" rx="4" />
        <rect x="33" y="36" width="22" height="24" rx="4" />
        <path d="M44 2L56 16L44 30L33 16Z" />
      </svg>
    </NavItem>
    <NavItem label="设自选">
      <svg viewBox="0 0 62 64" className="w-[62px] h-[64px]" fill="none">
        <circle cx="31" cy="32" r="29" stroke="#666" strokeWidth="3.5" />
        <circle cx="20" cy="32" r="3" fill="#666" />
        <circle cx="31" cy="32" r="3" fill="#666" />
        <circle cx="42" cy="32" r="3" fill="#666" />
      </svg>
    </NavItem>
  </div>
);

export default function App() {
  return (
    <div className="w-[1260px] h-[2720px] bg-white overflow-hidden font-['Roboto','Noto_Sans_CJK_SC',sans-serif]">
      <StatusBar />
      <Header />
      <Banner />
      <Quote />
      <AiRow />
      <Tabs />
      <Toolbar />
      <div className="flex">
        <div className="w-[841px]">
          <MainChart />
          <NetHeader />
          <NetChart />
          <FlowHeader />
          <FlowChart />
          <DdxHeader />
          <DdxChart off={0} />
          <DdxHeader />
          <DdxChart off={228} />
          <DateAxis />
        </div>
        <ChipPanel />
      </div>
      <Promo />
      <BottomNav />
    </div>
  );
}
